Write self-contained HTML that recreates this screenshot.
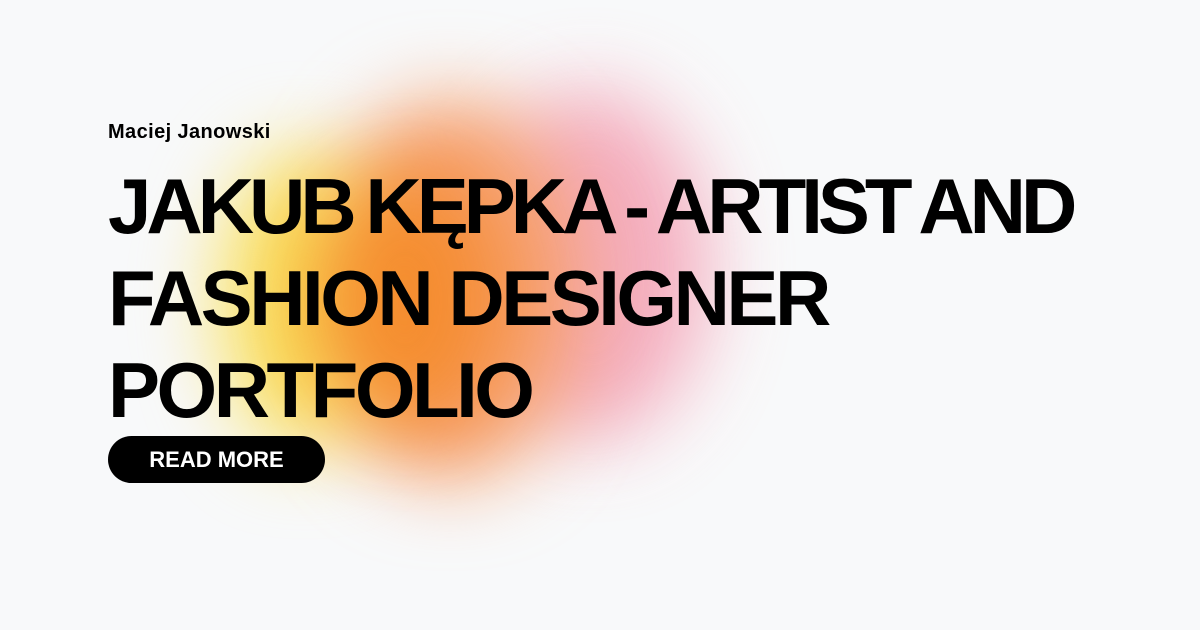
<!DOCTYPE html>
<html><head><meta charset="utf-8"><style>
html,body{margin:0;padding:0}
body{width:1200px;height:630px;background:#f8f9fa;position:relative;overflow:hidden;font-family:"Liberation Sans",sans-serif}
.b{position:absolute;border-radius:50%;filter:blur(40px)}
.t{position:absolute;left:108px;color:#000;font-weight:700}
</style></head><body>
<div class="b" style="left:470px;top:90px;width:240px;height:350px;background:#f4a0b4;opacity:.85"></div>
<div class="b" style="left:320px;top:100px;width:260px;height:380px;background:#f6a06e"></div>
<div class="b" style="left:220px;top:150px;width:170px;height:300px;background:#f9e05a"></div>
<div class="b" style="left:310px;top:170px;width:190px;height:260px;background:#f58a2a;opacity:.9"></div>
<div class="t" style="top:121px;font-size:20px;letter-spacing:.4px">Maciej Janowski</div>
<div class="t" style="top:160px;font-size:78px;line-height:92px;letter-spacing:-3.5px;white-space:nowrap"><span style="letter-spacing:-5px;word-spacing:-3px">JAKUB KĘPKA - ARTIST AND</span><br>FASHION DESIGNER<br>PORTFOLIO</div>
<div style="position:absolute;left:108px;top:436px;width:217px;height:47px;border-radius:24px;background:#000;color:#fff;font-weight:700;font-size:22px;line-height:47px;text-align:center">READ MORE</div>
</body></html>
